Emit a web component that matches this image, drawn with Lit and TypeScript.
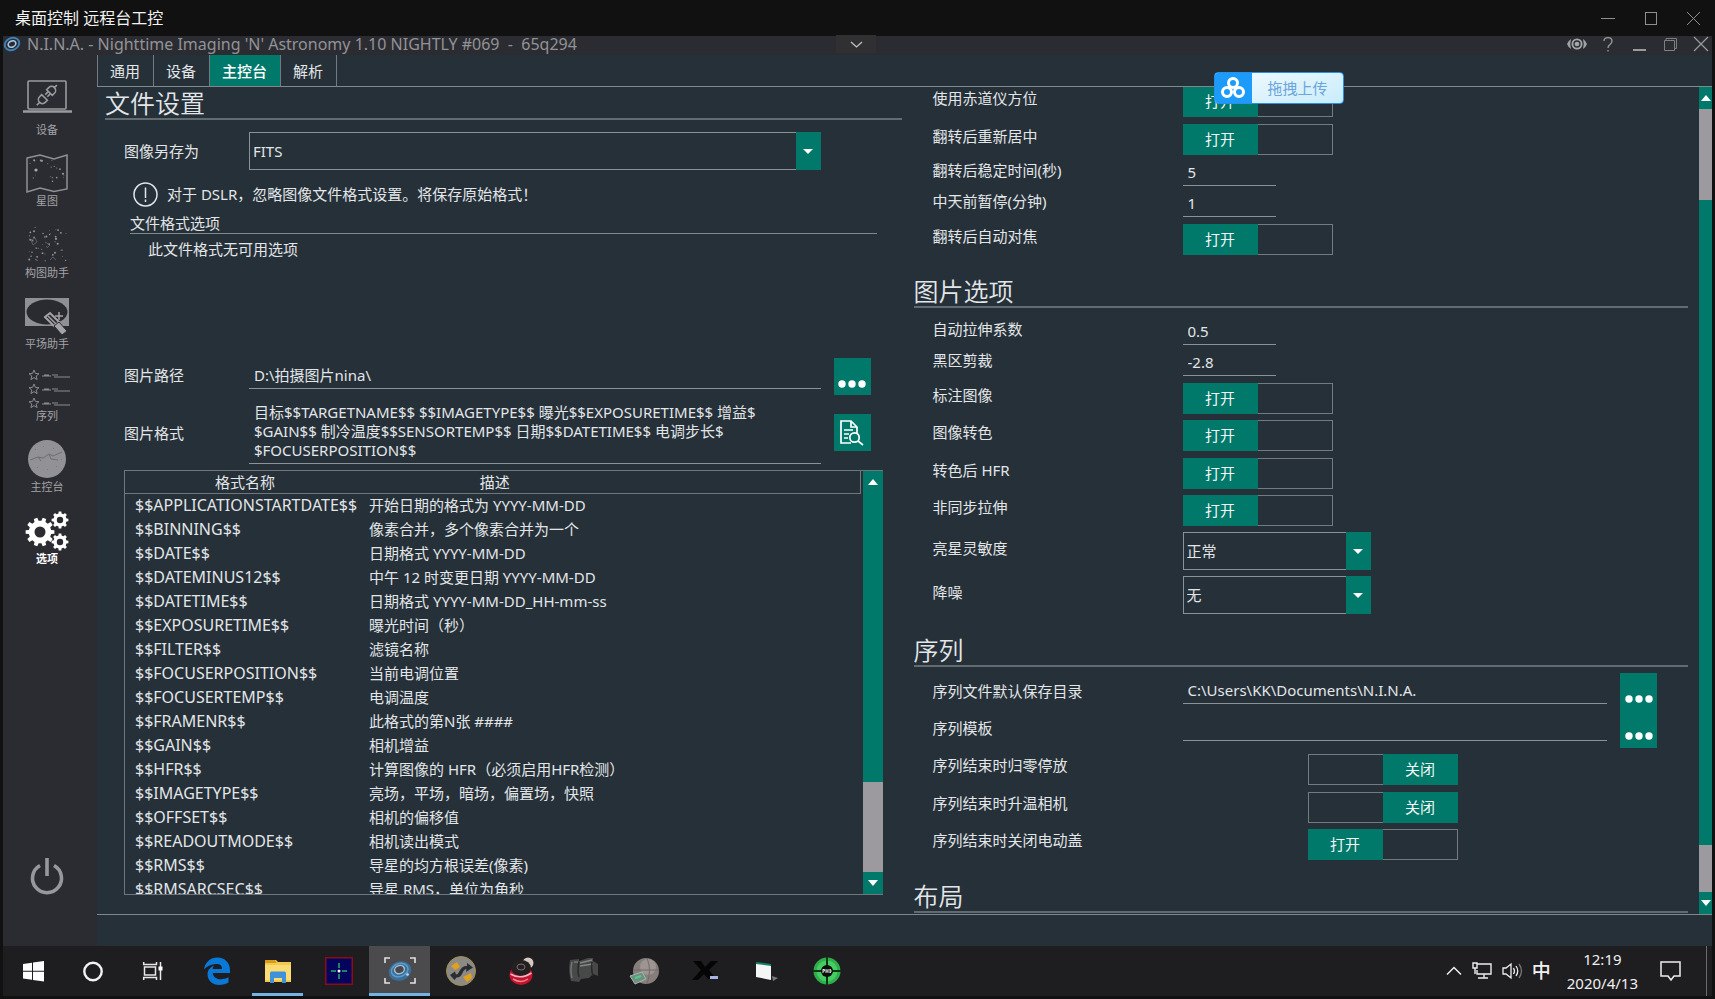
import { LitElement, html, svg, css, nothing } from "lit";
import { customElement, property } from "lit/decorators.js";
import { classMap } from "lit/directives/class-map.js";

const UI_FONT = css`"Noto Sans", "Noto Sans CJK SC", sans-serif`;

const starField = (seed: number, count: number, x0: number, y0: number, w: number, h: number) => {
  const stars = [];
  let s = seed;
  const next = () => (s = (s * 16807) % 2147483647) / 2147483647;
  for (let i = 0; i < count; i++) {
    stars.push(svg`<circle cx=${x0 + next() * w} cy=${y0 + next() * h} r=${0.4 + next() * 0.7} fill="#96979b"/>`);
  }
  return stars;
};

const gear = (cx: number, cy: number, r: number, teeth: number, hole: number) => {
  const pts: string[] = [];
  for (let i = 0; i < teeth; i++) {
    const step = (Math.PI * 2) / teeth;
    const a = i * step;
    const spots: [number, number][] = [[-0.3, 0.78], [-0.2, 1], [0.2, 1], [0.3, 0.78]];
    for (const [o, k] of spots) {
      pts.push(`${cx + Math.cos(a + o * step) * r * k} ${cy + Math.sin(a + o * step) * r * k}`);
    }
  }
  const d = `M${pts.join("L")}ZM${cx - hole} ${cy}a${hole} ${hole} 0 1 0 ${hole * 2} 0a${hole} ${hole} 0 1 0 ${-hole * 2} 0Z`;
  return svg`<path d=${d} fill="#fff" fill-rule="evenodd"/>`;
};

const star = (y: number) => svg`
  <path d="M11 ${y - 5}l1.400 3.400 3.600.3-2.800 2.300.9 3.600-3.100-2-3.100 2 .9-3.600L6 ${y - 1.3}l3.600-.3z" fill="none" stroke="#8a8b8f" stroke-width="1"/>
  <path d="M19 ${y + 1}h9m1-1h6m-4 2h16M21 ${y}h5" stroke="#8a8b8f" stroke-width="1.200"/>`;

const navIcons: Record<string, unknown> = {
  equipment: svg`<g fill="none" stroke="#9a9b9f">
    <rect x="5" y="-2" width="38" height="28" rx="1" stroke-width="1.6"/>
    <path d="M0 28.5h49" stroke-width="2.6"/>
    <g stroke-width="1.6" transform="rotate(45 24 12)">
      <path d="M24-2v4M20 8.500v-3a4 4 0 0 1 8 0v3zM22.500 9v4M25.500 9v4M20 15.500v3a4 4 0 0 0 8 0v-3zM24 22.500v4"/>
    </g></g>`,
  atlas: svg`<path d="M4 4l13-3 14 4 13-4v34l-13 2.500-14-3.500-13 4z" fill="none" stroke="#8f9094" stroke-width="1.500"/>
    ${starField(77, 20, 7, 6, 34, 26)}<circle cx="13" cy="16" r="1.600" fill="#a9aaad"/>`,
  framing: svg`${starField(4211, 46, 5, 1, 38, 36)}
    <path d="M8 14l4-2 2 4-4 3zM22 16l5 3-3 3M27 34l3-3 3 3" fill="none" stroke="#67686c" stroke-width=".8"/>`,
  flat: svg`<rect x="2" y="1" width="44" height="28" fill="#909094"/>
    <ellipse cx="24" cy="15" rx="20.500" ry="12.500" fill="#2a2b30"/>
    <path d="M22 20l5-4 9 9-5 4z" fill="#2a2b30" stroke="#a4a4a8" stroke-width="2"/>
    <path d="M25 19l8 8" stroke="#a4a4a8" stroke-width="1.500"/>
    <path d="M31 29l5-4 8 9-5 4z" fill="#a4a4a8" stroke="#2a2b30" stroke-width="1"/>
    <path d="M36 15v8M32 19h8" stroke="#a4a4a8" stroke-width="1.500"/>`,
  sequence: svg`${star(6)}${star(20)}${star(34)}`,
  imaging: svg`<circle cx="24" cy="19" r="19" fill="#929296"/>
    <path d="M7 20l8-3 5 1 6-4 4 2 9-4M15 17l3 4M26 14l2 5 7 1" fill="none" stroke="#6e6e72" stroke-width="1"/>
    <path d="M12 9l1 1M20 6l1 1M30 8l1 1M14 27l1 1M24 29l1 1M33 26l1 1M38 19l1 1" stroke="#777" stroke-width="1"/>`,
  options: svg`${gear(17, 20, 14.5, 10, 5.5)}${gear(37, 8, 8.5, 8, 3.2)}${gear(37, 30, 8.5, 8, 3.2)}`,
};

const navItems = [
  { id: "equipment", label: "设备" },
  { id: "atlas", label: "星图" },
  { id: "framing", label: "构图助手" },
  { id: "flat", label: "平场助手" },
  { id: "sequence", label: "序列" },
  { id: "imaging", label: "主控台" },
  { id: "options", label: "选项", active: true },
];

const taskIcons: Record<string, unknown> = {
  windows: svg`<path d="M4 7l9-1.300v8H4zM14 5.500L25 4v9.700H14zM4 14.700h9v8L4 21.400zM14 14.700h11V24.500l-11-1.600z" fill="#fff"/>`,
  cortana: svg`<circle cx="14" cy="14.500" r="8.700" fill="none" stroke="#f3f3f3" stroke-width="2.400"/>`,
  tasks: svg`<g fill="none" stroke="#e8e8e8" stroke-width="1.500"><rect x="5.500" y="10" width="11" height="8"/>
    <path d="M4.700 5v2.500h12.800V5M4.700 23v-2.500h12.800V23M21.500 5v18"/></g><rect x="19.500" y="9.500" width="4" height="4" fill="#fff"/>`,
  edge: svg`<path d="M1 12.500C2 5 7.500.5 14.500.5 22 .5 27 6 27 13v3H9.800c.4 4 4 6.300 8 6.300 3 0 5.500-.8 7.700-2v5.200c-2.500 1.500-5.600 2.500-9.200 2.500C9.500 28 4.500 23.500 4.500 17.300c0-4.300 2.700-7.300 6.500-8.900-.9 1.200-1.200 2.300-1.300 3.500H19c0-3.300-1.600-5-5-5C9 6.900 4 9 1 12.500z" fill="#0a78d6"/>`,
  explorer: svg`<path d="M1 3h11l2 2h13v20H1z" fill="#f3c94e"/><path d="M1 3h10l1.500 3H1z" fill="#d79b1c"/><path d="M1 8h26v15H1z" fill="#fadb74"/>
    <path d="M6 26V16q0-1.500 1.500-1.500h13Q22 14.500 22 16v10h-4v-5h-8v5z" fill="#3e92da"/>`,
  target: svg`<rect x=".75" y=".75" width="26.500" height="26.500" fill="#04045e" stroke="#8c0d18" stroke-width="1.500"/>
    <path d="M14 6v5M14 17v5M6 14h5M17 14h5" stroke="#25b06a" stroke-width="1.500"/><circle cx="14" cy="14" r="1.500" fill="#fff"/>`,
  nina: svg`<path d="M-1 6V1h5M24 1h5v5M29 21v5h-5M4 26h-5v-5" fill="none" stroke="#e2e2e2" stroke-width="1.600"/>
    <g transform="rotate(-20 14 14)"><ellipse cx="14" cy="14" rx="11.500" ry="9.500" fill="#3a6f9c"/><ellipse cx="14" cy="13" rx="8.500" ry="6.500" fill="none" stroke="#5f9cc9" stroke-width="1.500"/>
    <ellipse cx="14" cy="12.500" rx="5" ry="4" fill="#45484c" stroke="#a9bccb" stroke-width="1.500"/></g><circle cx="21.500" cy="17.500" r="1.300" fill="#b8dcf5"/>`,
  swap: svg`<circle cx="14" cy="14" r="14.500" fill="#8c8a84" stroke="#a08e4e"/><path d="M4 9l6-4 3 5-5 3zM16 20l8-4 1 5-5 4z" fill="#e0a020"/>
    <path d="M3 18l4.500 5 2-2.500c7 0 5-8 10-8.500l-.5 3 7-4.500-6-4.500v3c-8 0-7 8.500-11 8.500l-1-3z" fill="#2a2c31"/>`,
  camera: svg`<circle cx="20" cy="6" r="5.500" fill="#d8c9c0"/><ellipse cx="13" cy="18" rx="11.500" ry="10" fill="#c3122e"/>
    <ellipse cx="13" cy="11" rx="10" ry="8" fill="#242022"/><ellipse cx="13" cy="10" rx="4" ry="3" fill="none" stroke="#7d6d6d"/>
    <path d="M2.500 17q10 6 21-1" fill="none" stroke="#f3b3ba" stroke-width="1.500"/><path d="M5 22q8 5 15 0" fill="none" stroke="#ef8591" stroke-width="1.500"/>`,
  scope: svg`<path d="M1 3l9-1v2l9-3h5v3l5 3v12l-5-2-4 4-8 1-2 3-8-1q-3-9-1-21z" fill="#474848"/>
    <path d="M11 6l12-3M11 9l13-2" stroke="#858686" stroke-width="1.500"/><path d="M3 5q-2 8 0 16M5 5h4" stroke="#747575" fill="none" stroke-width="1.500"/><path d="M23 5q-1 8 1 14M10 5q-2 8 0 15" fill="none" stroke="#29292a" stroke-width="1.500"/>`,
  dome: svg`<circle cx="16" cy="14" r="13" fill="#857e7b"/><circle cx="18" cy="10" r="8" fill="#9d9591"/>
    <path d="M4 13h25M17 1q5 12 0 26" stroke="#716a68" fill="none"/><path d="M0 19l12-4 4 7-11 5z" fill="#6f8f80" stroke="#a4b8ad"/><path d="M5 21l6-2" stroke="#49d08b" stroke-width="2"/>`,
  xapp: svg`<path d="M2 4h8l4 6 6-6h7l-9 9 7 9h-8l-4-5-6 6H1l9-10z" fill="#050505"/><path d="M19 19h8v3h-8z" fill="#aab2e6"/>`,
  doc: svg`<path d="M4 5l15 2v3L4 8z" fill="#14806a"/><path d="M4 7l15 2v14L4 20z" fill="#f4f6f6"/><path d="M20 19l6 2-5 3z" fill="#77797b"/>`,
  phd: svg`<circle cx="14" cy="14" r="13.500" fill="#2fae4c"/><circle cx="14" cy="14" r="10.500" fill="#45cc62"/><path d="M14 0v28M0 14h28" stroke="#0c3416" stroke-width="2"/>
    <circle cx="14" cy="14" r="6" fill="#0b0f0c"/><path d="M10 12v4M10 12.500h1.500v1.500H10M13 12v4M15 12v4M13 14h2M17 12v4q2.500-2 0-4" stroke="#eee" fill="none" stroke-width=".9"/>`,
};

const formats: [string, string][] = [
  ["$$APPLICATIONSTARTDATE$$", "开始日期的格式为 YYYY-MM-DD"],
  ["$$BINNING$$", "像素合并，多个像素合并为一个"],
  ["$$DATE$$", "日期格式 YYYY-MM-DD"],
  ["$$DATEMINUS12$$", "中午 12 时变更日期 YYYY-MM-DD"],
  ["$$DATETIME$$", "日期格式 YYYY-MM-DD_HH-mm-ss"],
  ["$$EXPOSURETIME$$", "曝光时间（秒）"],
  ["$$FILTER$$", "滤镜名称"],
  ["$$FOCUSERPOSITION$$", "当前电调位置"],
  ["$$FOCUSERTEMP$$", "电调温度"],
  ["$$FRAMENR$$", "此格式的第N张 ####"],
  ["$$GAIN$$", "相机增益"],
  ["$$HFR$$", "计算图像的 HFR（必须启用HFR检测）"],
  ["$$IMAGETYPE$$", "亮场，平场，暗场，偏置场，快照"],
  ["$$OFFSET$$", "相机的偏移值"],
  ["$$READOUTMODE$$", "相机读出模式"],
  ["$$RMS$$", "导星的均方根误差(像素)"],
  ["$$RMSARCSEC$$", "导星 RMS，单位为角秒"],
];

const imagePattern =
  "目标$$TARGETNAME$$ $$IMAGETYPE$$ 曝光$$EXPOSURETIME$$ 增益$\n$GAIN$$ 制冷温度$$SENSORTEMP$$ 日期$$DATETIME$$ 电调步长$\n$FOCUSERPOSITION$$";

const base = css`
  *, *::before, *::after { box-sizing: border-box; }
  button, input, select, textarea {
    font: inherit; color: inherit; margin: 0; padding: 0; border: 0; background: none; border-radius: 0; outline: none;
  }
  svg { display: block; overflow: visible; }
`;

/** Two-cell switch: the filled half carries the state's name. */
@customElement("nina-toggle")
export class NinaToggle extends LitElement {
  @property({ type: Boolean }) on = false;
  @property() name = "";
  static styles = [base, css`
    :host { display: block; width: 150px; height: 31px; }
    .switch { position: relative; display: grid; grid-template-columns: 1fr 1fr; height: 31px; border: 1px solid #747b80; }
    .box { position: absolute; inset: 0; width: 100%; height: 100%; opacity: 0; }
    .half { display: flex; align-items: center; justify-content: center; line-height: 20px; padding-bottom: 1px; }
    .filled { background: #00796b; color: #f4f8f7; margin: -1px 0; }
    .left { margin-left: -1px; }
    .right { margin-right: -1px; }
  `];
  render() {
    return html`<label class="switch">
      <input class="box" type="checkbox" aria-label=${this.name} .checked=${this.on} @change=${(e: Event) => (this.on = (e.target as HTMLInputElement).checked)} />
      <span class=${classMap({ half: true, left: true, filled: this.on })}>${this.on ? "打开" : nothing}</span>
      <span class=${classMap({ half: true, right: true, filled: !this.on })}>${this.on ? nothing : "关闭"}</span>
    </label>`;
  }
}

/** Vertical bar; spans are flex weights of track and thumb sections. */
@customElement("nina-scrollbar")
export class NinaScrollbar extends LitElement {
  @property({ attribute: false }) parts: { size: number; thumb: boolean }[] = [];
  static styles = [base, css`
    :host { display: flex; flex-direction: column; background: #00796b; overflow: hidden; }
    .arrow { flex: none; height: 22px; width: 100%; display: flex; align-items: center; justify-content: center; }
    .thumb { background: #9c9a9e; }
  `];
  render() {
    return html`
      <button class="arrow" aria-label="向上滚动"><svg width="10" height="6"><path d="M0 6l5-6 5 6z" fill="#fff"/></svg></button>
      ${this.parts.map((p) => html`<div class=${p.thumb ? "thumb" : "track"} style="flex:${p.size} 0 0"></div>`)}
      <button class="arrow" aria-label="向下滚动"><svg width="10" height="6"><path d="M0 0l5 6 5-6z" fill="#fff"/></svg></button>`;
  }
}

@customElement("app-root")
export class AppRoot extends LitElement {
  static styles = [base, css`
    :host { display: block; height: 100vh; background: #111; color: #e2e6e8; font: 15px/20px ${UI_FONT}; overflow: hidden; }
    .remote { display: flex; flex-direction: column; height: 100%; padding: 0 3px 3px; }
    .remote-bar { flex: none; height: 36px; display: flex; align-items: center; justify-content: space-between; padding: 0 10px 0 12px; font-size: 16px; color: #f2f2f2; }
    .app { position: relative; flex: 1; min-height: 0; display: grid; grid-template: 19px 1fr / 94px 1fr; background: #2b2c31; }
    .title { grid-column: 1 / 3; display: flex; align-items: center; justify-content: space-between; padding: 0 3px 3px 0; font-size: 16px; color: #929396; }
    .caption { display: flex; align-items: center; gap: 6px; white-space: pre; flex: 1; }
    .drop { width: 40px; height: 18px; background: #302f32; display: flex; align-items: center; justify-content: center; }
    .controls { flex: 1; display: flex; justify-content: flex-end; align-items: center; gap: 15px; }
    .controls button { width: 16px; height: 18px; display: flex; align-items: center; justify-content: center; }

    .nav { display: flex; flex-direction: column; align-items: center; justify-content: space-between; padding: 17px 6px 51px 0; }
    .nav-list { display: grid; grid-auto-rows: 1fr; height: 500px; }
    .nav-item { padding-top: 11px; display: flex; flex-direction: column; align-items: center; font-size: 11px; line-height: 14px; color: #a2a3a7; white-space: nowrap; }
    .nav-item.active { color: #fff; font-weight: 700; }

    .content { display: flex; flex-direction: column; min-width: 0; min-height: 0; background: #263038; }
    .tabs { flex: none; display: flex; height: 32px; border-bottom: 1px solid #7f888c; }
    .tab { padding: 1px 13px 0 12px; border-right: 1px solid #737b80; color: #e2e6e8; }
    .tab:first-child { border-left: 1px solid #737b80; }
    .tab.active { background: #00796b; color: #fff; font-weight: 500; }
    .panes { flex: 1; min-height: 0; display: grid; grid-template-columns: 1fr 1fr; border-bottom: 1px solid #7f888c; }
    .status { flex: none; height: 31px; }
    h2 { margin: 0; padding-top: 1px; font-size: 25px; font-weight: 350; line-height: 30px; border-bottom: 2px solid #626b70; }

    .left { display: flex; flex-direction: column; min-height: 0; padding: 0 3px 19px 8px; }
    .form { flex: 1; min-height: 0; display: flex; flex-direction: column; padding: 12px 19px 0; }
    .line { flex: none; display: grid; grid-template-columns: 125px 1fr 50px; align-items: center; }
    .line .side { display: flex; justify-content: flex-end; }
    .form-main { flex: none; padding-right: 12px; }
    .save { margin-right: 12px; }
    .note { flex: none; display: flex; align-items: center; gap: 9px; height: 24px; margin: 12px 9px 7px; }
    .group { flex: none; margin: 0 6px; padding: 0; border: 0; height: 145px; }
    .group legend { width: 100%; padding: 0; border-bottom: 1px solid #7f888c; }
    .group p { margin: 5px 0 0 18px; }
    .path { height: 37px; align-items: start; }
    .path label { padding-top: 7px; }
    .pattern { height: 75px; }
    .combo { position: relative; display: block; height: 38px; }
    .combo select { appearance: none; width: 100%; height: 38px; border: 1px solid #8b9296; padding: 0 28px 1px 3px; }
    .caret { position: absolute; top: 0; right: 0; bottom: 0; width: 25px; background: #00796b; display: flex; align-items: center; justify-content: center; pointer-events: none; }
    .text { width: 100%; height: 31px; border-bottom: 1px solid #8b9296; padding: 4px 5px 0; }
    .path .text { padding-top: 3px; }
    .area { display: block; width: 100%; height: 62px; line-height: 19px; border-bottom: 1px solid #8b9296; padding: 1px 5px; resize: none; overflow: hidden; white-space: pre; }
    .icon-button { width: 37px; height: 37px; background: #00796b; display: flex; align-items: center; justify-content: center; }

    .list { flex: 1; min-height: 0; display: flex; gap: 2px; border: 1px solid #6f777c; border-right: 0; }
    .list-body { flex: 1; overflow: hidden; }
    .list nina-scrollbar { width: 20px; }
    table { width: 100%; border-collapse: collapse; table-layout: fixed; }
    th { height: 22px; padding: 0; font-weight: 400; border-bottom: 1px solid #6f777c; }
    th.last { border-right: 1px solid #6f777c; padding-right: 235px; }
    .col-name { width: 240px; }
    td { height: 24px; padding: 0 0 0 4px; white-space: nowrap; }
    td.key { padding-left: 10px; font-size: 16px; }

    .right { display: flex; min-width: 0; min-height: 0; }
    .scroll { flex: 1; min-width: 0; overflow: hidden; padding: 0 11px 0 9px; }
    .scroll-inner { margin-top: -8px; }
    .right nina-scrollbar { width: 13px; }
    .scroll h2 { padding-top: 21px; margin-bottom: 6px; }
    .rows { display: grid; padding-left: 19px; }
    .row { display: grid; grid-template-columns: 250px 1fr; align-items: center; }
    .row > :last-child { align-self: end; }
    .r-toggle { height: 38px; }
    .r-text { height: 31px; }
    .r-text > :first-child, .r-combo > :first-child { padding-bottom: 1px; }
    .r-combo { height: 44px; }
    .split { grid-auto-rows: 1fr; }
    .split .row { height: auto; }
    .four { height: 150px; }
    .five { height: 187px; padding-right: 31px; }
    .five .row > :first-child { padding-bottom: 2px; }
    .short { width: 93px; }
    .narrow { width: 188px; }
    .browse { display: flex; gap: 13px; align-items: flex-start; }
    .row .browse { align-self: stretch; padding: 0; }
    .browse .text { flex: 1; }
    .browse .icon-button { height: 100%; }
    .offset { padding-left: 125px; }

    .upload { position: absolute; left: calc(70.8% + 1px); top: 36px; width: 130px; height: 32px; display: grid; grid-template-columns: 37px 1fr; border: 1px solid #2a8fe6; border-radius: 4px; overflow: hidden; background: linear-gradient(160deg, #f4fbff, #c9ecfa); color: #6aa5dc; }
    .upload-mark { background: #1c9bfb; display: flex; align-items: center; justify-content: center; }
    .upload-text { display: flex; align-items: center; justify-content: center; }

    .taskbar { flex: none; height: 50px; display: flex; align-items: center; justify-content: space-between; background: #1e1d1f; }
    .apps { display: flex; height: 50px; }
    .task { width: 61px; display: flex; flex-direction: column; align-items: center; justify-content: center; position: relative; }
    .task.sys { width: 60px; }
    .task.first { margin-left: 3px; }
    .task.current { background: #4b4b4d; }
    .under { position: absolute; left: 5px; right: 5px; bottom: 0; height: 3px; background: #74b3e6; }
    .current .under { left: 0; right: 0; }
    .tray { display: flex; align-items: center; height: 50px; padding-right: 5px; gap: 8px; color: #f0f0f0; }
    .ime { font-size: 19px; font-weight: 500; }
    .clock { text-align: center; line-height: 24px; margin: 0 14px 0 8px; }
    .peek { width: 1px; height: 50px; background: #6c6c6e; margin-left: 16px; }
  `];

  private combo(id: string, value: string, cls = "") {
    return html`<span class="combo ${cls}"><select id=${id}><option>${value}</option></select>
      <span class="caret"><svg width="10" height="5"><path d="M0 0h10l-5 5z" fill="#fff"/></svg></span></span>`;
  }

  private dots(label: string) {
    return html`<button class="icon-button" aria-label=${label}><svg width="28" height="24" viewBox="0 0 28 24" fill="#fff">
      <circle cx="4" cy="19" r="3.700"/><circle cx="14" cy="19" r="3.700"/><circle cx="24" cy="19" r="3.700"/></svg></button>`;
  }

  private toggleRow(label: string, on = true, offset = false) {
    return html`<div class="row r-toggle"><span>${label}</span>
      <div class=${offset ? "offset" : ""}><nina-toggle .on=${on} .name=${label}></nina-toggle></div></div>`;
  }

  private textRow(id: string, label: string, value: string) {
    return html`<div class="row r-text"><label for=${id}>${label}</label><input class="text short" id=${id} .value=${value} /></div>`;
  }

  private browseRow(id: string, label: string, value: string) {
    return html`<div class="row"><label for=${id}>${label}</label>
      <div class="browse"><input class="text" id=${id} .value=${value} />${this.dots("浏览" + label)}</div></div>`;
  }

  private task(icon: string, cls = "", under = false) {
    return html`<button class="task ${cls}" aria-label=${icon}><svg width="28" height="28" viewBox="0 0 28 28">${taskIcons[icon]}</svg>
      ${under ? html`<span class="under"></span>` : nothing}</button>`;
  }

  render() {
    return html`<div class="remote">
      <header class="remote-bar">
        <span>桌面控制 远程台工控</span>
        <svg width="102" height="14" fill="none" stroke="#8f8f8f"><path d="M1 7.500h14"/><rect x="45.500" y="1.500" width="11" height="12"/><path d="M87 1l13 13M100 1L87 14"/></svg>
      </header>
      <div class="app">
        <div class="title">
          <span class="caption"><svg width="18" height="16" viewBox="0 0 18 16" fill="none"><g transform="rotate(-25 9 8)"><ellipse cx="9" cy="8" rx="7.500" ry="6" stroke="#3d7fb5" stroke-width="2"/><ellipse cx="9" cy="8" rx="4" ry="3" stroke="#a9cbe6" stroke-width="1.600"/></g></svg><span>N.I.N.A. - Nighttime Imaging 'N' Astronomy 1.10 NIGHTLY #069  -  65q294</span></span>
          <button class="drop" aria-label="展开"><svg width="11" height="7" fill="none" stroke="#c4c4c4" stroke-width="1.200"><path d="M0 1l5.500 5L11 1"/></svg></button>
          <span class="controls">
            <button aria-label="显示"><svg width="20" height="12" viewBox="0 0 20 12"><path d="M4 1Q1 3 0 6q1 3 4 5-1.500-5 0-10zM16 1q3 2 4 5-1 3-4 5 1.500-5 0-10z" fill="#a0a1a4"/><circle cx="10" cy="6" r="5.500" fill="#a5a6a9"/><circle cx="10" cy="6" r="3" fill="none" stroke="#2b2c31" stroke-width="1.300"/></svg></button>
            <button aria-label="帮助"><svg width="10" height="15" fill="none" stroke="#9a9b9e" stroke-width="1.300"><path d="M1 4q0-3.300 4-3.300T9 4q0 2-2 3.500T5 11M5 13v1.500"/></svg></button>
            <button aria-label="最小化"><svg width="13" height="14"><path d="M0 13h13" stroke="#a6a7a9" stroke-width="1.800"/></svg></button>
            <button aria-label="还原"><svg width="13" height="13" fill="none" stroke="#7d7e81"><path d="M.5 2.500h10v10H.5zM2 2.500v-2h10.500v10H11"/></svg></button>
            <button aria-label="关闭"><svg width="14" height="14" stroke="#9a9b9e" stroke-width="1.200"><path d="M0 0l14 14M14 0L0 14"/></svg></button>
          </span>
        </div>

        <nav class="nav">
          <div class="nav-list">${navItems.map((n) => html`<button class=${classMap({ "nav-item": true, active: !!n.active })}>
            <svg width="48" height="40" viewBox="0 0 48 40">${navIcons[n.id]}</svg><span>${n.label}</span></button>`)}</div>
          <button aria-label="关闭程序"><svg width="34" height="38" viewBox="0 0 34 38" fill="none" stroke="#97989b" stroke-width="3.600"><path d="M10 8.500A14.500 14.500 0 1 0 24 8.500M17 1v18"/></svg></button>
        </nav>

        <main class="content">
          <div class="tabs" role="tablist">
            ${["通用", "设备", "主控台", "解析"].map((t) => html`<button role="tab" class=${classMap({ tab: true, active: t === "主控台" })}>${t}</button>`)}
          </div>
          <div class="panes">
            <section class="left">
              <h2>文件设置</h2>
              <div class="form">
                <div class="line save"><label for="save-as">图像另存为</label>${this.combo("save-as", "FITS")}</div>
                <div class="note"><svg width="25" height="25" viewBox="0 0 25 25" fill="none" stroke="#e2e6e8" stroke-width="1.500"><circle cx="12.500" cy="12.500" r="11.500"/><path d="M12.500 5.500v10.500M12.500 17.500v2.500"/></svg>
                  <span>对于 DSLR，忽略图像文件格式设置。将保存原始格式！</span></div>
                <fieldset class="group"><legend>文件格式选项</legend><p>此文件格式无可用选项</p></fieldset>
                <div class="form-main">
                  <div class="line path"><label for="path">图片路径</label><input class="text" id="path" .value=${"D:\\拍摄图片nina\\"} />
                    <span class="side">${this.dots("浏览图片路径")}</span></div>
                  <div class="line pattern"><label for="pattern">图片格式</label><textarea class="area" id="pattern" rows="3" .value=${imagePattern}></textarea>
                    <span class="side"><button class="icon-button" aria-label="预览格式"><svg width="24" height="26" viewBox="0 0 24 26" fill="none" stroke="#fff" stroke-width="1.700"><path d="M11 23H1V1h10l6 6v6M11 1v6h6M4 10h9M4 14h5M4 18h4"/><circle cx="14.500" cy="17.500" r="4.700"/><path d="M18 21l5 4"/></svg></button></span></div>
                </div>
                <div class="list">
                  <div class="list-body"><table>
                    <thead><tr><th class="col-name">格式名称</th><th class="last">描述</th></tr></thead>
                    <tbody>${formats.map(([k, d]) => html`<tr><td class="key">${k}</td><td>${d}</td></tr>`)}</tbody>
                  </table></div>
                  <nina-scrollbar .parts=${[{ size: 287, thumb: false }, { size: 90, thumb: true }]}></nina-scrollbar>
                </div>
              </div>
            </section>

            <section class="right">
              <div class="scroll"><div class="scroll-inner">
                <div class="rows">
                  ${this.toggleRow("使用赤道仪方位")}${this.toggleRow("翻转后重新居中")}
                  ${this.textRow("settle", "翻转后稳定时间(秒)", "5")}${this.textRow("pause", "中天前暂停(分钟)", "1")}
                  ${this.toggleRow("翻转后自动对焦")}
                </div>
                <h2>图片选项</h2>
                <div class="rows">${this.textRow("stretch", "自动拉伸系数", "0.5")}${this.textRow("clip", "黑区剪裁", "-2.8")}</div>
                <div class="rows split four">${["标注图像", "图像转色", "转色后 HFR", "非同步拉伸"].map((t) => this.toggleRow(t))}</div>
                <div class="rows">
                  <div class="row r-combo"><label for="stars">亮星灵敏度</label>${this.combo("stars", "正常", "narrow")}</div>
                  <div class="row r-combo"><label for="noise">降噪</label>${this.combo("noise", "无", "narrow")}</div>
                </div>
                <h2>序列</h2>
                <div class="rows split five">
                  ${this.browseRow("seq-dir", "序列文件默认保存目录", "C:\\Users\\KK\\Documents\\N.I.N.A.")}
                  ${this.browseRow("seq-tpl", "序列模板", "")}
                  ${this.toggleRow("序列结束时归零停放", false, true)}${this.toggleRow("序列结束时升温相机", false, true)}${this.toggleRow("序列结束时关闭电动盖", true, true)}
                </div>
                <h2>布局</h2>
              </div></div>
              <nina-scrollbar .parts=${[{ size: 91, thumb: true }, { size: 645, thumb: false }, { size: 47, thumb: true }]}></nina-scrollbar>
            </section>
          </div>
          <div class="status"></div>
        </main>
        <button class="upload"><span class="upload-mark"><svg width="24" height="22" viewBox="0 0 24 22" fill="none" stroke="#fff" stroke-width="3"><circle cx="12" cy="6" r="4.500"/><circle cx="6" cy="15" r="4.500"/><circle cx="18" cy="15" r="4.500"/></svg></span><span class="upload-text">拖拽上传</span></button>
      </div>

      <footer class="taskbar">
        <div class="apps">
          ${this.task("windows", "sys")}${this.task("cortana", "sys")}${this.task("tasks", "sys")}${this.task("edge", "first")}${this.task("explorer", "", true)}
          ${this.task("target")}${this.task("nina", "current", true)}
          ${["swap", "camera", "scope", "dome", "xapp", "doc", "phd"].map((t) => this.task(t))}
        </div>
        <div class="tray">
          <svg width="16" height="10" fill="none" stroke="#eee" stroke-width="1.500"><path d="M1 8.500l7-7 7 7"/></svg>
          <svg width="24" height="18" viewBox="0 0 24 18" fill="none" stroke="#eee" stroke-width="1.400"><path d="M7 2h14v10H7V8M14 12v4M8 16h10M3 1h4v5H3zM5 6v6"/></svg>
          <svg width="22" height="18" viewBox="0 0 22 18" fill="none" stroke="#eee" stroke-width="1.300"><path d="M1 6h3l5-4v14l-5-4H1zM11.500 6q2 3 0 6M14 4q3.500 5 0 10"/><path d="M17 2q5 7 0 14" stroke="#777"/></svg>
          <span class="ime">中</span>
          <span class="clock">12:19<br />2020/4/13</span>
          <svg width="22" height="20" viewBox="0 0 22 20" fill="none" stroke="#eee" stroke-width="1.500"><path d="M1 1h19v14h-6l-3 4-3-4H1z"/></svg>
          <span class="peek"></span>
        </div>
      </footer>
    </div>`;
  }
}
